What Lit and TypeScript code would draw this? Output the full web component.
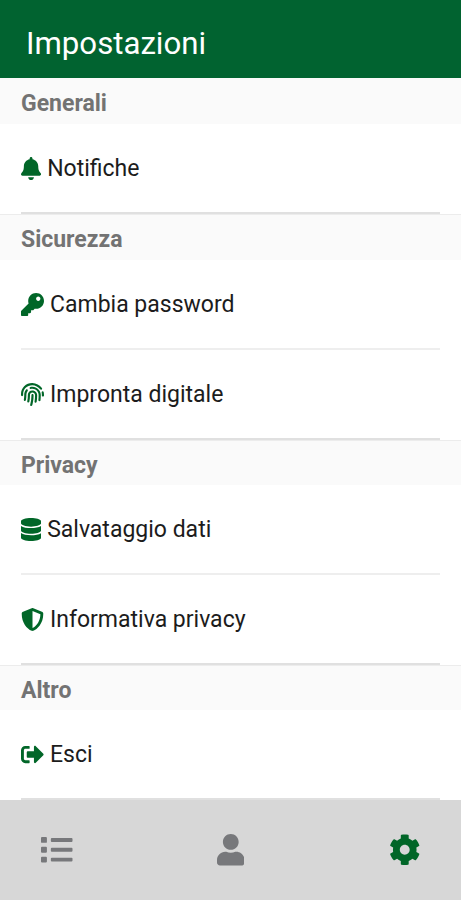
import { LitElement, html, css, svg } from "lit";
import { customElement, property } from "lit/decorators.js";

const ICONS: Record<string, { w: number; d: string }> = {
  bell: { w: 448, d: "M224 512c35.32 0 63.97-28.65 63.97-64H160.03c0 35.35 28.65 64 63.97 64zm215.39-149.71c-19.32-20.76-55.47-51.99-55.47-154.29 0-77.7-54.48-139.9-127.94-155.16V32c0-17.67-14.32-32-31.98-32s-31.98 14.33-31.98 32v20.84C118.56 68.1 64.08 130.3 64.08 208c0 102.3-36.15 133.53-55.47 154.29-6 6.45-8.66 14.16-8.61 21.71.11 16.4 12.98 32 32.1 32h383.8c19.12 0 32-15.6 32.1-32 .05-7.55-2.61-15.27-8.61-21.71z" },
  key: { w: 512, d: "M512 176.001C512 273.203 433.202 352 336 352c-11.22 0-22.19-1.062-32.827-3.069l-24.012 27.014A23.999 23.999 0 0 1 261.223 384H224v40c0 13.255-10.745 24-24 24h-40v40c0 13.255-10.745 24-24 24H24c-13.255 0-24-10.745-24-24v-78.059c0-6.365 2.529-12.47 7.029-16.971l161.802-161.802C163.108 213.814 160 195.271 160 176 160 78.798 238.797.001 335.999 0 433.488-.001 512 78.511 512 176.001zM336 128c0 26.51 21.49 48 48 48s48-21.49 48-48-21.49-48-48-48-48 21.49-48 48z" },
  fingerprint: { w: 512, d: "M256.12 245.96c-13.25 0-24 10.74-24 24 1.14 72.25-8.14 141.9-27.7 211.55-2.73 9.72 2.15 30.49 23.12 30.49 10.48 0 20.11-6.92 23.09-17.52 13.53-47.91 31.04-125.41 29.48-224.52.01-13.25-10.73-24-23.99-24zm-.86-81.73C194 164.16 151.25 211.3 152.1 265.32c.75 47.94-3.75 95.91-13.37 142.55-2.69 12.98 5.67 25.69 18.64 28.36 13.05 2.67 25.67-5.66 28.36-18.64 10.34-50.09 15.17-101.58 14.37-153.02-.41-25.95 19.92-52.49 54.45-52.34 31.31.47 57.15 25.34 57.62 55.47.77 48.05-2.81 96.33-10.61 143.55-2.17 13.06 6.69 25.42 19.76 27.58 19.97 3.33 26.81-15.1 27.58-19.77 8.28-50.03 12.06-101.21 11.27-152.11-.88-55.8-47.94-101.88-104.91-102.72zm-110.69-19.78c-10.3-8.34-25.37-6.8-33.76 3.48-25.62 31.5-39.39 71.28-38.75 112 .59 37.58-2.47 75.27-9.11 112.05-2.34 13.05 6.31 25.53 19.36 27.89 20.11 3.5 27.07-14.81 27.89-19.36 7.19-39.84 10.5-80.66 9.86-121.33-.47-29.88 9.2-57.88 28-80.97 8.35-10.28 6.79-25.39-3.49-33.76zm109.47-62.33c-15.41-.41-30.87 1.44-45.78 4.97-12.89 3.06-20.87 15.98-17.83 28.89 3.06 12.89 16 20.83 28.89 17.83 11.05-2.61 22.47-3.77 34-3.69 75.43 1.13 137.73 61.5 138.88 134.58.59 37.88-1.28 76.11-5.58 113.63-1.5 13.17 7.95 25.08 21.11 26.58 16.72 1.95 25.51-11.88 26.58-21.11a929.06 929.06 0 0 0 5.89-119.85c-1.56-98.75-85.07-180.33-186.16-181.83zm252.07 121.45c-2.86-12.92-15.51-21.2-28.61-18.27-12.94 2.86-21.12 15.66-18.26 28.61 4.71 21.41 4.91 37.41 4.7 61.6-.11 13.27 10.55 24.09 23.8 24.2h.2c13.17 0 23.89-10.61 24-23.8.18-22.18.4-44.11-5.83-72.34zm-40.12-90.72C417.29 43.46 337.6 1.29 252.81.02 183.02-.82 118.47 24.91 70.46 72.94 24.09 119.37-.9 181.04.14 246.65l-.12 21.47c-.39 13.25 10.03 24.31 23.28 24.69.23.02.48.02.72.02 12.92 0 23.59-10.3 23.97-23.3l.16-23.64c-.83-52.5 19.16-101.86 56.28-139 38.76-38.8 91.34-59.67 147.68-58.86 69.45 1.03 134.73 35.56 174.62 92.39 7.61 10.86 22.56 13.45 33.42 5.86 10.84-7.62 13.46-22.59 5.84-33.43z" },
  database: { w: 448, d: "M448 73.143v45.714C448 159.143 347.667 192 224 192S0 159.143 0 118.857V73.143C0 32.857 100.333 0 224 0s224 32.857 224 73.143zM448 176v102.857C448 319.143 347.667 352 224 352S0 319.143 0 278.857V176c48.125 33.143 136.208 48.572 224 48.572S399.874 209.143 448 176zm0 160v102.857C448 479.143 347.667 512 224 512S0 479.143 0 438.857V336c48.125 33.143 136.208 48.572 224 48.572S399.874 369.143 448 336z" },
  shield: { w: 512, d: "M466.5 83.7l-192-80a48.15 48.15 0 0 0-36.9 0l-192 80C27.7 91.1 16 108.6 16 128c0 198.5 114.5 335.7 221.5 380.3 11.8 4.9 25.1 4.9 36.9 0C360.1 472.6 496 349.3 496 128c0-19.4-11.7-36.9-29.5-44.3zM256.1 446.3l-.1-381 175.9 73.3c-3.3 151.4-82.1 261.1-175.8 307.7z" },
  exit: { w: 512, d: "M497 273L329 441c-15 15-41 4.5-41-17v-96H152c-13.3 0-24-10.7-24-24v-96c0-13.3 10.7-24 24-24h136V88c0-21.4 25.9-32 41-17l168 168c9.3 9.4 9.3 24.6 0 34zM192 436v-40c0-6.6-5.4-12-12-12H96c-17.7 0-32-14.3-32-32V160c0-17.7 14.3-32 32-32h84c6.6 0 12-5.4 12-12V76c0-6.6-5.4-12-12-12H96c-53 0-96 43-96 96v192c0 53 43 96 96 96h84c6.6 0 12-5.4 12-12z" },
  list: { w: 512, d: "M80 368H16a16 16 0 0 0-16 16v64a16 16 0 0 0 16 16h64a16 16 0 0 0 16-16v-64a16 16 0 0 0-16-16zm0-320H16A16 16 0 0 0 0 64v64a16 16 0 0 0 16 16h64a16 16 0 0 0 16-16V64a16 16 0 0 0-16-16zm0 160H16a16 16 0 0 0-16 16v64a16 16 0 0 0 16 16h64a16 16 0 0 0 16-16v-64a16 16 0 0 0-16-16zm416 176H176a16 16 0 0 0-16 16v32a16 16 0 0 0 16 16h320a16 16 0 0 0 16-16v-32a16 16 0 0 0-16-16zm0-320H176a16 16 0 0 0-16 16v32a16 16 0 0 0 16 16h320a16 16 0 0 0 16-16V80a16 16 0 0 0-16-16zm0 160H176a16 16 0 0 0-16 16v32a16 16 0 0 0 16 16h320a16 16 0 0 0 16-16v-32a16 16 0 0 0-16-16z" },
  user: { w: 448, d: "M224 256c70.7 0 128-57.3 128-128S294.7 0 224 0 96 57.3 96 128s57.3 128 128 128zm89.6 32h-16.7c-22.2 10.2-46.9 16-72.9 16s-50.6-5.8-72.9-16h-16.7C60.2 288 0 348.2 0 422.4V464c0 26.5 21.5 48 48 48h352c26.5 0 48-21.5 48-48v-41.6c0-74.2-60.2-134.4-134.4-134.4z" },
  cog: { w: 512, d: "M487.4 315.7l-42.6-24.6c4.3-23.2 4.3-47 0-70.2l42.6-24.6c4.9-2.8 7.1-8.6 5.5-14-11.1-35.6-30-67.8-54.7-94.6-3.8-4.1-10-5.1-14.8-2.3L380.8 110c-17.9-15.4-38.5-27.3-60.8-35.1V25.8c0-5.6-3.9-10.5-9.4-11.7-36.7-8.2-74.3-7.8-109.2 0-5.5 1.2-9.4 6.1-9.4 11.7V75c-22.2 7.9-42.8 19.8-60.8 35.1L88.7 85.5c-4.9-2.8-11-1.9-14.8 2.3-24.7 26.7-43.6 58.9-54.7 94.6-1.7 5.4.6 11.2 5.5 14L67.3 221c-4.3 23.2-4.3 47 0 70.2l-42.6 24.6c-4.9 2.8-7.1 8.6-5.5 14 11.1 35.6 30 67.8 54.7 94.6 3.8 4.1 10 5.1 14.8 2.3l42.6-24.6c17.9 15.4 38.5 27.3 60.8 35.1v49.2c0 5.6 3.9 10.5 9.4 11.7 36.7 8.2 74.3 7.8 109.2 0 5.5-1.2 9.4-6.1 9.4-11.7v-49.2c22.2-7.9 42.8-19.8 60.8-35.1l42.6 24.6c4.9 2.8 11 1.9 14.8-2.3 24.7-26.7 43.6-58.9 54.7-94.6 1.5-5.5-.7-11.3-5.6-14.1zM256 336c-44.1 0-80-35.9-80-80s35.9-80 80-80 80 35.9 80 80-35.9 80-80 80z" },
};

@customElement("app-icon")
export class AppIcon extends LitElement {
  @property() name = "";
  static styles = css`
    :host { display: block; flex: none; height: 1em; }
    .glyph { display: block; height: 1em; fill: currentColor; }
  `;
  render() {
    const i = ICONS[this.name];
    return html`<svg class="glyph" viewBox="0 0 ${i.w} 512">${svg`<path d=${i.d}></path>`}</svg>`;
  }
}

const SECTIONS = [
  { title: "Generali", items: [["bell", "Notifiche"]] },
  { title: "Sicurezza", items: [["key", "Cambia password"], ["fingerprint", "Impronta digitale"]] },
  { title: "Privacy", items: [["database", "Salvataggio dati"], ["shield", "Informativa privacy"]] },
  { title: "Altro", items: [["exit", "Esci"]] },
];

@customElement("app-root")
export class AppRoot extends LitElement {
  static styles = css`
    :host {
      display: flex;
      flex-direction: column;
      height: 900px;
      background: #fff;
      font-family: Roboto, sans-serif;
      color: #1c1c1c;
    }
    .bar {
      flex: none;
      box-sizing: border-box;
      height: 78px;
      padding: 26px 26px 0;
      background: #016330;
      color: #fff;
      font-size: 31.2px;
      line-height: 36px;
    }
    .title {
      height: 46px;
      box-sizing: border-box;
      padding: 3px 21px 0;
      background: #fafafa;
      color: #737373;
      font-size: 23px;
      font-weight: 700;
      line-height: 45px;
    }
    .section { flex: none; }
    .section + .section .title { border-top: 1px solid #ececec; padding-top: 2px; }
    .section:nth-of-type(n + 3) .title { height: 45px; }
    .item {
      display: flex;
      align-items: center;
      box-sizing: border-box;
      height: 90px;
      margin: 0 21px;
      gap: 6px;
      border-bottom: 2px solid #eeeeee;
      font-size: 23px;
    }
    .item:last-child { border-bottom-color: #e0e0e0; }
    .item app-icon { color: #016628; }
    .label { padding-top: 1px; }
    .nav {
      flex: 1;
      display: flex;
      align-items: center;
      justify-content: space-between;
      padding: 0 41px;
      background: #d7d7d7;
      color: #77787b;
      font-size: 31.5px;
    }
    .active { color: #016628; }
  `;
  render() {
    return html`
      <header class="bar">Impostazioni</header>
      ${SECTIONS.map(
        (s) => html`<section class="section">
          <div class="title">${s.title}</div>
          ${s.items.map(([icon, label]) => html`<div class="item"><app-icon name=${icon}></app-icon><span class="label">${label}</span></div>`)}
        </section>`
      )}
      <nav class="nav">
        <app-icon name="list"></app-icon>
        <app-icon name="user"></app-icon>
        <app-icon class="active" name="cog"></app-icon>
      </nav>
    `;
  }
}
